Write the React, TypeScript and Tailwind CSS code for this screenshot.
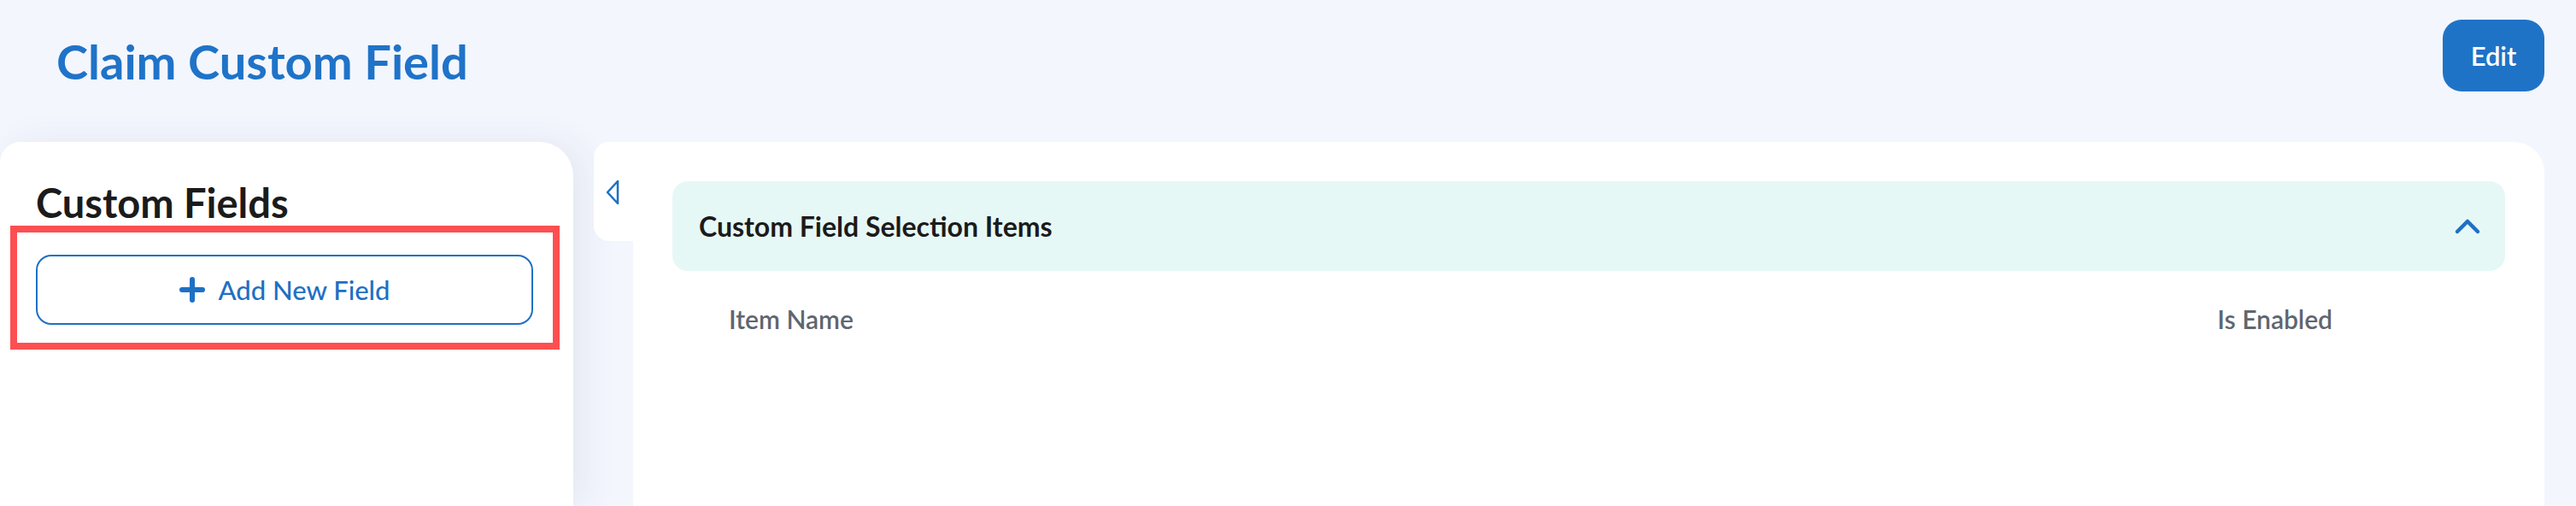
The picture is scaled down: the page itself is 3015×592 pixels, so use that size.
import React from "react";

const font = { fontFamily: "Lato, 'Noto Sans', sans-serif" };

function PlusIcon() {
    return (
        <svg width="30" height="30" viewBox="0 0 30 30" fill="none">
            <path d="M15 3 V27 M3 15 H27" stroke="#1e70c4" strokeWidth="6" strokeLinecap="round" />
        </svg>
    );
}

function CollapseIcon() {
    return (
        <svg width="18" height="30" viewBox="0 0 18 30" fill="none">
            <path d="M15 2 L3 15 L15 28 Z" stroke="#1e70c4" strokeWidth="2.5" strokeLinejoin="round" />
        </svg>
    );
}

function ChevronUp() {
    return (
        <svg width="32" height="20" viewBox="0 0 32 20" fill="none">
            <path d="M4 16 L16 4 L28 16" stroke="#1e70c4" strokeWidth="4.5" strokeLinecap="round" strokeLinejoin="round" />
        </svg>
    );
}

export default function App() {
    return (
        <div className="w-[3015px] h-[592px] overflow-hidden bg-[#f3f6fd] flex flex-col" style={font}>
            {/* header */}
            <div className="flex items-start justify-between h-[166px] pl-[66px] pr-[37px] pt-[23px]">
                <h1 className="mt-[16px] text-[56px] leading-[66px] font-bold text-[#1f73c8]">Claim Custom Field</h1>
                <button className="w-[119px] h-[84px] rounded-[22px] bg-[#1f73c6] text-white text-[31px] font-semibold">
                    Edit
                </button>
            </div>

            {/* body */}
            <div className="flex flex-1 items-start">
                {/* left card */}
                <div className="w-[671px] h-[426px] bg-white rounded-tl-[24px] rounded-tr-[40px] shadow-[14px_0_40px_rgba(40,60,120,0.07)] pt-[44px] pl-[12px] shrink-0">
                    <h2 className="pl-[30px] text-[47px] leading-[54px] font-bold text-[#1b1b1b]">Custom Fields</h2>
                    <div className="w-[643px] h-[145px] border-[8px] border-[#fd4f51] pt-[26px] pl-[22px]">
                        <button className="w-[582px] h-[82px] rounded-[18px] border-2 border-[#1e70c4] bg-white flex items-center justify-center gap-[16px] text-[#1e70c4] text-[31px] font-medium">
                            <PlusIcon />
                            Add New Field
                        </button>
                    </div>
                </div>

                {/* tab + main card */}
                <div className="flex flex-1 ml-[24px] mr-[37px]">
                    <div className="w-[46px] h-[116px] bg-white rounded-l-[18px] flex justify-end pt-[44px] pr-[15px] shrink-0">
                        <CollapseIcon />
                    </div>
                    <div className="flex-1 h-[426px] bg-white rounded-tr-[36px] pt-[46px] px-[46px]">
                        <div className="h-[105px] bg-[#e6f8f6] rounded-[18px] flex items-center justify-between pl-[31px] pr-[28px]">
                            <span className="text-[32px] font-bold text-[#1b1b1b]">Custom Field Selection Items</span>
                            <ChevronUp />
                        </div>
                        <div className="flex items-center justify-between pl-[66px] pr-[202px] pt-[34px]">
                            <span className="text-[30px] font-semibold text-[#5f6670]">Item Name</span>
                            <span className="text-[30px] font-semibold text-[#5f6670]">Is Enabled</span>
                        </div>
                    </div>
                </div>
            </div>
        </div>
    );
}
